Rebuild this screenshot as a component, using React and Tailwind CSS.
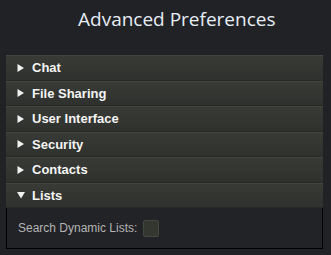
import React from "react";

const sections = ["Chat", "File Sharing", "User Interface", "Security", "Contacts"];

function Arrow({ open }) {
  return (
    <svg width="8" height="8" viewBox="0 0 8 8" className="shrink-0">
      {open ? <polygon points="0,1 8,1 4,7.5" fill="#f2f2f2" /> : <polygon points="0.5,0 7,4 0.5,8" fill="#f2f2f2" />}
    </svg>
  );
}

function Header({ label, open }) {
  return (
    <div className="flex h-[25.5px] items-center gap-[7px] border-t border-t-[#42463f] border-b border-b-[#262925] bg-gradient-to-b from-[#373a35] to-[#2e312d] pl-[11px] text-[13px] font-bold text-[#f4f4f4]">
      <Arrow open={open} />
      <span className="leading-none">{label}</span>
    </div>
  );
}

export default function App() {
  return (
    <div className="h-[255px] w-[331px] bg-[#212226] font-['Liberation_Sans',Arial,sans-serif]">
      <div className="pl-[78px] pt-[7px] text-[19px] leading-[24px] text-[#e6edf5] font-['Open_Sans',sans-serif]">
        Advanced Preferences
      </div>
      <div className="ml-[6px] mt-[24px] w-[317px]">
        {sections.map((s) => (
          <Header key={s} label={s} />
        ))}
        <Header label="Lists" open />
        <div className="flex h-[41px] items-center gap-[6px] border-x border-b border-black bg-[#222327] pl-[11px] text-[12px] text-[#b4b4b4]">
          <span>Search Dynamic Lists:</span>
          <div className="h-[17px] w-[16px] rounded-[2px] border border-[#45483f] bg-[#34372f]" />
        </div>
      </div>
    </div>
  );
}
